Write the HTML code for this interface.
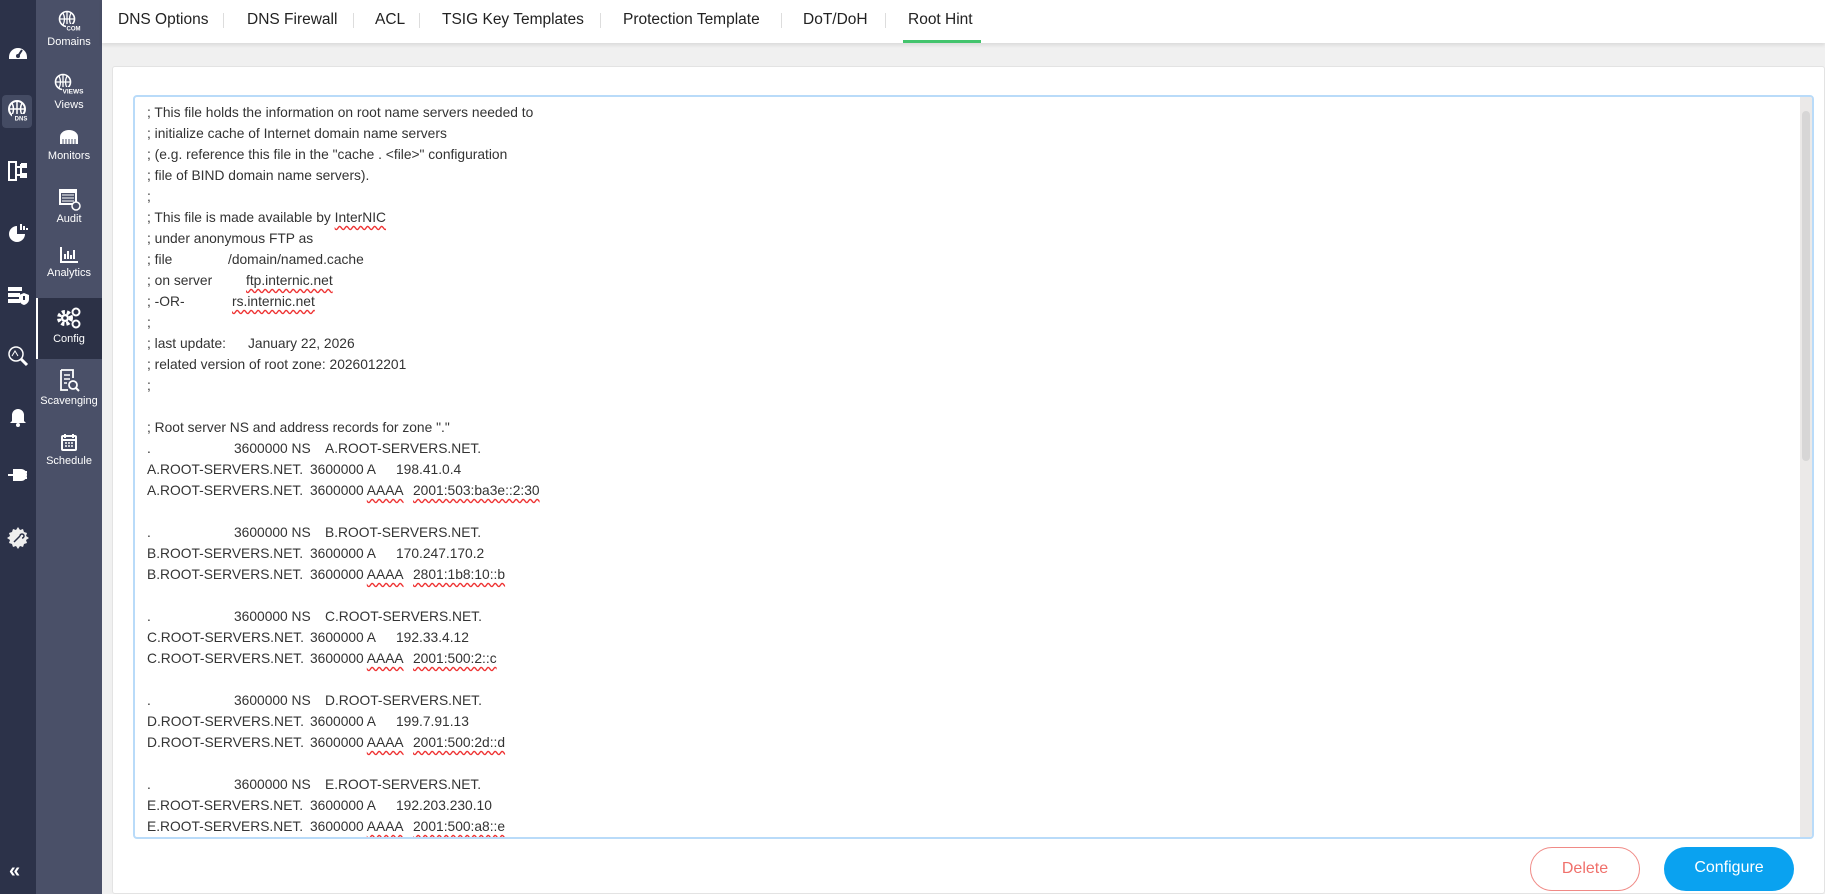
<!DOCTYPE html>
<html><head><meta charset="utf-8"><style>
*{margin:0;padding:0;box-sizing:border-box}
body{width:1825px;height:894px;overflow:hidden;background:#f0f0f0;font-family:"Liberation Sans",sans-serif;position:relative}
.d1{position:absolute;left:0;top:0;width:36px;height:894px;background:#2c3249}
.d2{position:absolute;left:36px;top:0;width:66px;height:894px;background:#4a5068}
.ic{position:absolute;left:6px;width:24px;height:24px}
.it{position:absolute;left:36px;width:66px;text-align:center;color:#fff;font-size:11px}
.it svg{display:block;margin:0 auto}
.hdr{position:absolute;left:102px;top:0;width:1723px;height:43px;background:#fff;box-shadow:0 2px 4px rgba(0,0,0,.1)}
.tab{position:absolute;top:11px;font-size:15.5px;color:#222}
.sep{position:absolute;top:13px;width:1px;height:15px;background:#ddd}
.card{position:absolute;left:112px;top:66px;width:1713px;height:828px;background:#fff;border:1px solid #e3e3e3;border-radius:3px}
.ta{position:absolute;left:133px;top:95px;width:1681px;height:744px;border:2px solid #b9dbf9;border-radius:4px;background:#fff;overflow:hidden}
.sb{position:absolute;right:0;top:0;width:12px;height:100%;background:#ebe9e8}
.th{position:absolute;right:2px;top:14px;width:8px;height:350px;background:#d7d6d6;border-radius:4px}
.tx{position:absolute;left:12px;top:5px;font-size:13.8px;color:#333}
.l{position:relative;height:21px;line-height:21px;white-space:nowrap}
.l span{position:absolute;top:0}
.w{text-decoration:underline wavy #e33;text-decoration-skip-ink:none;text-underline-offset:3px}
.btn{position:absolute;top:847px;height:44px;border-radius:22px;font-size:16px;text-align:center;line-height:42px}
</style></head><body>
<div class="d1"></div>
<div class="d2"></div>
<svg class="ic" style="top:40px" viewBox="0 0 24 24"><path d="M3 17a9 9 0 1 1 18 0v2H3z" fill="#fff"/><path d="M12 16l4-6" stroke="#2c3249" stroke-width="2"/><circle cx="12" cy="16" r="2" fill="#2c3249"/></svg>
<div style="position:absolute;left:2px;top:95px;width:30px;height:33px;background:#444b63;border-radius:4px"></div>
<svg class="ic" style="top:99px" viewBox="0 0 24 24"><circle cx="11" cy="10" r="8" fill="none" stroke="#fff" stroke-width="2"/><path d="M3 10h16M11 2v16M6 4c2 4 2 8 0 12M16 4c-2 4-2 8 0 12" stroke="#fff" stroke-width="1.5" fill="none"/><rect x="6" y="15" width="18" height="7" fill="#444b63"/><text x="15" y="21.5" font-size="6" fill="#fff" text-anchor="middle" font-weight="bold" font-family="Liberation Sans">DNS</text></svg>
<svg class="ic" style="top:159px" viewBox="0 0 24 24"><rect x="3" y="3" width="7" height="18" fill="none" stroke="#fff" stroke-width="2"/><path d="M10 8h5M10 16h5M15 5v14" stroke="#fff" stroke-width="2"/><rect x="15" y="4" width="6" height="5" fill="#fff"/><rect x="15" y="14" width="6" height="5" fill="#fff"/></svg>
<svg class="ic" style="top:221px" viewBox="0 0 24 24"><path d="M11 5a8 8 0 1 0 8 8h-8z" fill="#fff"/><path d="M15 3v6M18 5v4M21 7v2" stroke="#fff" stroke-width="2"/></svg>
<svg class="ic" style="top:283px" viewBox="0 0 24 24"><rect x="2" y="4" width="14" height="4" fill="#fff"/><rect x="2" y="10" width="12" height="4" fill="#fff"/><rect x="2" y="16" width="12" height="4" fill="#fff"/><path d="M18 10l5 2v4c0 3-2 5-5 6-3-1-5-3-5-6v-4z" fill="#fff"/><path d="M18 13v4" stroke="#2c3249" stroke-width="2"/></svg>
<svg class="ic" style="top:344px" viewBox="0 0 24 24"><circle cx="10" cy="10" r="7" fill="none" stroke="#fff" stroke-width="1.5"/><path d="M15 15l6 6" stroke="#fff" stroke-width="3"/><path d="M6 12l3-5 3 5" stroke="#fff" fill="none"/></svg>
<svg class="ic" style="top:404px" viewBox="0 0 24 24"><path d="M6 17V11a6 6 0 0 1 12 0v6l2 2H4z" fill="#fff"/><circle cx="12" cy="21" r="2" fill="#fff"/></svg>
<svg class="ic" style="top:463px" viewBox="0 0 24 24"><path d="M2 12h6M8 7h7a3 3 0 0 1 0 10H8z" stroke="#fff" stroke-width="2" fill="#fff"/><path d="M15 9h6M15 15h6" stroke="#fff" stroke-width="2"/></svg>
<svg class="ic" style="top:526px" viewBox="0 0 24 24"><path d="M12 1l2 3 3-1 1 3 3 1-1 3 3 2-3 2 1 3-3 1-1 3-3-1-2 3-2-3-3 1-1-3-3-1 1-3-3-2 3-2-1-3 3-1 1-3 3 1z" fill="#eee"/><path d="M8 16l6-6m0 0a2 2 0 1 1 2 2" stroke="#2c3249" stroke-width="1.5" fill="none"/></svg>
<div style="position:absolute;left:9px;top:860px;color:#fff;font-size:20px;font-weight:bold">«</div>
<div class="it" style="top:10px"><svg width="24" height="22" viewBox="0 0 24 22"><circle cx="10" cy="9" r="7.5" fill="none" stroke="#fff" stroke-width="1.6"/><path d="M2.5 9h15M10 1.5v15M6 3c2 4 2 8 0 12M14 3c-2 4-2 8 0 12" stroke="#fff" stroke-width="1.3" fill="none"/><rect x="9" y="14" width="15" height="7" fill="#4a5068"/><text x="16.5" y="20.5" font-size="6" fill="#fff" text-anchor="middle" font-weight="bold" font-family="Liberation Sans">COM</text></svg><div style="margin-top:4px">Domains</div></div>
<div class="it" style="top:73px"><svg width="30" height="22" viewBox="0 0 30 22"><circle cx="9" cy="9" r="7.5" fill="none" stroke="#fff" stroke-width="1.6"/><path d="M1.5 9h15M9 1.5v15M5 3c2 4 2 8 0 12M13 3c-2 4-2 8 0 12" stroke="#fff" stroke-width="1.3" fill="none"/><rect x="8" y="14" width="22" height="7" fill="#4a5068"/><text x="19" y="20.5" font-size="6.5" fill="#fff" text-anchor="middle" font-weight="bold" font-family="Liberation Sans">VIEWS</text></svg><div style="margin-top:4px">Views</div></div>
<div class="it" style="top:129px"><svg width="22" height="16" viewBox="0 0 22 16"><path d="M2 15V8a9 7 0 0 1 18 0v7z" fill="#fff"/><path d="M5 10v5M8 10v5M11 10v5M14 10v5M17 10v5" stroke="#4a5068" stroke-width="1"/></svg><div style="margin-top:5px">Monitors</div></div>
<div class="it" style="top:187px"><svg width="24" height="24" viewBox="0 0 24 24"><rect x="2" y="2" width="18" height="16" fill="#fff"/><rect x="4" y="6" width="14" height="10" fill="#4a5068"/><path d="M5 8h12M5 11h12M5 14h12" stroke="#fff"/><circle cx="19" cy="19" r="4" fill="#4a5068" stroke="#fff" stroke-width="1.5"/></svg><div style="margin-top:2px">Audit</div></div>
<div class="it" style="top:246px"><svg width="20" height="18" viewBox="0 0 20 18"><path d="M2 1v15h17" stroke="#fff" stroke-width="2" fill="none"/><path d="M6 13V8M9 13V5M12 13V9M15 13V4" stroke="#fff" stroke-width="2"/></svg><div style="margin-top:3px">Analytics</div></div>
<div style="position:absolute;left:36px;top:298px;width:66px;height:61px;background:#2c3146;border-left:2px solid #fff"></div>
<div class="it" style="top:306px"><svg width="26" height="24" viewBox="0 0 26 24"><circle cx="9" cy="12" r="6" fill="none" stroke="#fff" stroke-width="4" stroke-dasharray="3 2"/><circle cx="9" cy="12" r="4" fill="#fff"/><circle cx="9" cy="12" r="1.8" fill="#2c3146"/><circle cx="20" cy="6" r="3.5" fill="none" stroke="#fff" stroke-width="2"/><circle cx="20" cy="18" r="3.5" fill="none" stroke="#fff" stroke-width="2"/></svg><div style="margin-top:3px">Config</div></div>
<div class="it" style="top:369px"><svg width="22" height="24" viewBox="0 0 22 24"><path d="M3 1h12v8M3 1v20h7" stroke="#fff" stroke-width="1.8" fill="none"/><path d="M6 6h6M6 10h6M6 14h3" stroke="#fff" stroke-width="1.5"/><circle cx="15" cy="16" r="4" fill="none" stroke="#fff" stroke-width="1.8"/><path d="M18 19l3 3" stroke="#fff" stroke-width="2"/></svg><div style="margin-top:2px">Scavenging</div></div>
<div class="it" style="top:433px"><svg width="18" height="18" viewBox="0 0 18 18"><rect x="2" y="3" width="14" height="14" rx="1" fill="none" stroke="#fff" stroke-width="2"/><path d="M5 1v4M13 1v4M2 7h14" stroke="#fff" stroke-width="2"/><path d="M5 10h2M8 10h2M11 10h2M5 13h2M8 13h2M11 13h2" stroke="#fff" stroke-width="1.5"/></svg><div style="margin-top:4px">Schedule</div></div>
<div class="hdr"></div>
<div class="tab" style="left:118px">DNS Options</div><div class="sep" style="left:223px"></div>
<div class="tab" style="left:247px">DNS Firewall</div><div class="sep" style="left:353px"></div>
<div class="tab" style="left:375px">ACL</div><div class="sep" style="left:419px"></div>
<div class="tab" style="left:442px">TSIG Key Templates</div><div class="sep" style="left:600px"></div>
<div class="tab" style="left:623px">Protection Template</div><div class="sep" style="left:781px"></div>
<div class="tab" style="left:803px">DoT/DoH</div><div class="sep" style="left:885px"></div>
<div class="tab" style="left:908px">Root Hint</div>
<div style="position:absolute;left:903px;top:40px;width:78px;height:3px;background:#43c46d"></div>
<div class="card"></div>
<div class="ta"><div class="sb"><div class="th"></div></div>
<div class="tx">
<div class="l">; This file holds the information on root name servers needed to</div>
<div class="l">; initialize cache of Internet domain name servers</div>
<div class="l">; (e.g. reference this file in the "cache . &lt;file&gt;" configuration</div>
<div class="l">; file of BIND domain name servers).</div>
<div class="l">;</div>
<div class="l">; This file is made available by <span style="position:static" class="w">InterNIC</span></div>
<div class="l">; under anonymous FTP as</div>
<div class="l">; file<span style="left:81px">/domain/named.cache</span></div>
<div class="l">; on server<span style="left:99px" class="w">ftp.internic.net</span></div>
<div class="l">; -OR-<span style="left:85px" class="w">rs.internic.net</span></div>
<div class="l">;</div>
<div class="l">; last update:<span style="left:101px">January 22, 2026</span></div>
<div class="l">; related version of root zone: 2026012201</div>
<div class="l">;</div>
<div class="l"></div>
<div class="l">; Root server NS and address records for zone "."</div>
<div class="l">.<span style="left:87px">3600000 NS</span><span style="left:178px">A.ROOT-SERVERS.NET.</span></div>
<div class="l">A.ROOT-SERVERS.NET.<span style="left:163px">3600000 A</span><span style="left:249px">198.41.0.4</span></div>
<div class="l">A.ROOT-SERVERS.NET.<span style="left:163px">3600000 <span class="w" style="position:static">AAAA</span></span><span style="left:266px" class="w">2001:503:ba3e::2:30</span></div>
<div class="l"></div>
<div class="l">.<span style="left:87px">3600000 NS</span><span style="left:178px">B.ROOT-SERVERS.NET.</span></div>
<div class="l">B.ROOT-SERVERS.NET.<span style="left:163px">3600000 A</span><span style="left:249px">170.247.170.2</span></div>
<div class="l">B.ROOT-SERVERS.NET.<span style="left:163px">3600000 <span class="w" style="position:static">AAAA</span></span><span style="left:266px" class="w">2801:1b8:10::b</span></div>
<div class="l"></div>
<div class="l">.<span style="left:87px">3600000 NS</span><span style="left:178px">C.ROOT-SERVERS.NET.</span></div>
<div class="l">C.ROOT-SERVERS.NET.<span style="left:163px">3600000 A</span><span style="left:249px">192.33.4.12</span></div>
<div class="l">C.ROOT-SERVERS.NET.<span style="left:163px">3600000 <span class="w" style="position:static">AAAA</span></span><span style="left:266px" class="w">2001:500:2::c</span></div>
<div class="l"></div>
<div class="l">.<span style="left:87px">3600000 NS</span><span style="left:178px">D.ROOT-SERVERS.NET.</span></div>
<div class="l">D.ROOT-SERVERS.NET.<span style="left:163px">3600000 A</span><span style="left:249px">199.7.91.13</span></div>
<div class="l">D.ROOT-SERVERS.NET.<span style="left:163px">3600000 <span class="w" style="position:static">AAAA</span></span><span style="left:266px" class="w">2001:500:2d::d</span></div>
<div class="l"></div>
<div class="l">.<span style="left:87px">3600000 NS</span><span style="left:178px">E.ROOT-SERVERS.NET.</span></div>
<div class="l">E.ROOT-SERVERS.NET.<span style="left:163px">3600000 A</span><span style="left:249px">192.203.230.10</span></div>
<div class="l">E.ROOT-SERVERS.NET.<span style="left:163px">3600000 <span class="w" style="position:static">AAAA</span></span><span style="left:266px" class="w">2001:500:a8::e</span></div>
<div class="l"></div>
</div></div>
<div class="btn" style="left:1530px;width:110px;border:1px solid #f08a86;color:#f0706b;background:#fff">Delete</div>
<div class="btn" style="left:1664px;width:130px;background:#0aa2f0;color:#fff">Configure</div>
</body></html>
